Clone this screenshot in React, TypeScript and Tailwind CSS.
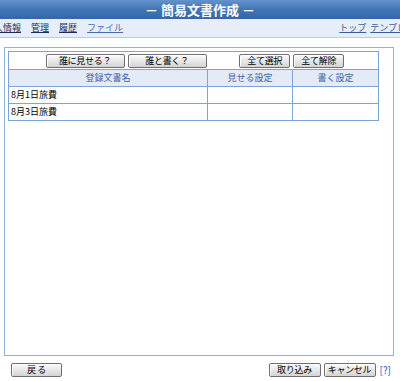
import React from "react";

const font = { fontFamily: '"MS UI Gothic", "Noto Sans CJK JP", sans-serif' };

const Btn = ({ children, w }: { children: React.ReactNode; w: string }) => (
  <button
    className={`${w} h-[14px] border border-[#6f6f6f] rounded-[2px] bg-gradient-to-b from-[#fbfbfb] to-[#d4d4d4] text-[9px] leading-[12px] tracking-[-0.3px] text-black shadow-[inset_1px_1px_0_#ffffff] whitespace-nowrap`}
  >
    {children}
  </button>
);

const App = () => {
  return (
    <div className="w-[400px] h-[381px] bg-white overflow-hidden text-[9px]" style={font}>
      <div className="h-[19px] bg-gradient-to-b from-[#6393cd] via-[#4275b6] to-[#3567a8] flex items-center justify-center text-white font-bold text-[13px]">
        <span>－ 簡易文書作成 －</span>
      </div>
      <div className="h-[19px] bg-[#e8eef8] border-b border-[#b9cbe6] flex items-center overflow-hidden">
        <div className="flex items-center gap-[10px] -ml-[15px] shrink-0">
          <a className="underline text-[#1c2c5a]">個人情報</a>
          <a className="underline text-[#1c2c5a]">管理</a>
          <a className="underline text-[#1c2c5a]">履歴</a>
          <a className="underline text-[#4a6cae]">ファイル</a>
        </div>
        <div className="ml-auto flex items-center gap-[4px] -mr-[24px] shrink-0">
          <a className="underline text-[#3d5c9c]">トップ</a>
          <a className="underline text-[#3d5c9c]">テンプレート</a>
        </div>
      </div>
      <div className="pl-[4px] pt-[9px]">
        <div className="w-[390px] h-[309px] border border-[#93b1dc] pl-[3px] pt-[3px]">
          <table className="w-[371px] border-collapse border border-[#7fa3d6]">
            <tbody>
              <tr className="h-[18px]">
                <td className="w-[199px] p-0">
                  <div className="flex justify-end gap-[3px] pr-[1px]">
                    <Btn w="w-[79px]">誰に見せる？</Btn>
                    <Btn w="w-[79px]">誰と書く？</Btn>
                  </div>
                </td>
                <td colSpan={2} className="p-0">
                  <div className="flex justify-center gap-[3px] pr-[2px]">
                    <Btn w="w-[51px]">全て選択</Btn>
                    <Btn w="w-[51px]">全て解除</Btn>
                  </div>
                </td>
              </tr>
              <tr className="h-[17px] bg-[#e3ebf7] text-[#3a64a6]">
                <td className="border border-[#7fa3d6] text-center p-0">登録文書名</td>
                <td className="w-[85px] border border-[#7fa3d6] text-center p-0">見せる設定</td>
                <td className="border border-[#7fa3d6] text-center p-0">書く設定</td>
              </tr>
              <tr className="h-[17px]">
                <td className="border border-[#7fa3d6] pl-[2px] py-0">8月1日旅費</td>
                <td className="border border-[#7fa3d6] p-0"></td>
                <td className="border border-[#7fa3d6] p-0"></td>
              </tr>
              <tr className="h-[17px]">
                <td className="border border-[#7fa3d6] pl-[2px] py-0">8月3日旅費</td>
                <td className="border border-[#7fa3d6] p-0"></td>
                <td className="border border-[#7fa3d6] p-0"></td>
              </tr>
            </tbody>
          </table>
        </div>
      </div>
      <div className="flex items-center pt-[6px] pl-[11px] pr-[9px]">
        <Btn w="w-[51px]">戻 る</Btn>
        <div className="ml-auto flex items-center gap-[3px]">
          <Btn w="w-[52px]">取り込み</Btn>
          <Btn w="w-[52px]">キャンセル</Btn>
          <span className="text-[#2255cc] text-[10px] ml-[1px]">[?]</span>
        </div>
      </div>
    </div>
  );
};

export default App;
